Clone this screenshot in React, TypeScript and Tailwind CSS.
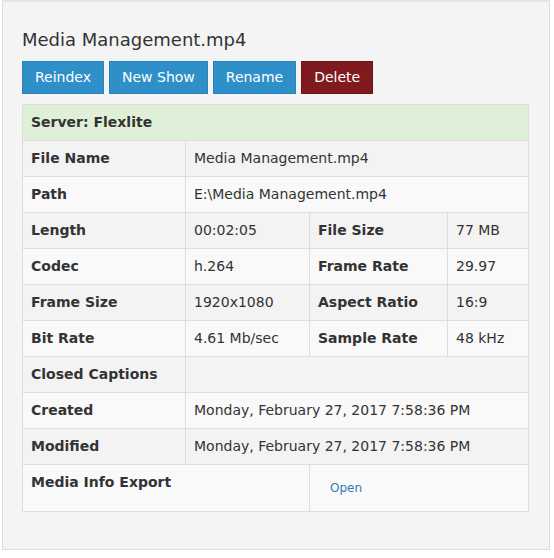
import React from "react";

const font = { fontFamily: '"DejaVu Sans", Verdana, sans-serif' };

const lbl = "border border-[#dddddd] px-2 py-2 font-bold text-[14px] leading-[19px] text-[#333333] text-left align-top";
const val = "border border-[#dddddd] px-2 py-2 text-[14px] leading-[19px] text-[#333333] text-left align-top";

export default function App() {
  return (
    <div className="w-[554px] h-[558px] bg-white" style={font}>
      <div className="ml-[2px] w-[548px] h-[550px] bg-[#f4f4f4] border border-[#dddddd] border-t-2 border-t-[#e4e4e4] pt-[27px] pl-[19px]">
        <h3 className="text-[18px] leading-[22px] font-normal text-[#333333] m-0">Media Management.mp4</h3>
        <div className="flex gap-[5px] mt-[10px]">
          <button className="h-[33px] px-3 bg-[#2f8fc8] border border-[#2a82b8] text-white text-[14px] leading-[19px]">Reindex</button>
          <button className="h-[33px] px-3 bg-[#2f8fc8] border border-[#2a82b8] text-white text-[14px] leading-[19px]">New Show</button>
          <button className="h-[33px] px-3 bg-[#2f8fc8] border border-[#2a82b8] text-white text-[14px] leading-[19px]">Rename</button>
          <button className="h-[33px] px-3 bg-[#801a1e] border border-[#6e1518] text-white text-[14px] leading-[19px]">Delete</button>
        </div>
        <table className="mt-[10px] w-[506px] border-collapse table-fixed">
          <colgroup>
            <col className="w-[163px]" />
            <col className="w-[124px]" />
            <col className="w-[138px]" />
            <col className="w-[81px]" />
          </colgroup>
          <tbody>
            <tr className="bg-[#dff0d8]">
              <td colSpan={4} className={lbl}>Server: Flexlite</td>
            </tr>
            <tr className="bg-[#f3f3f3]">
              <td className={lbl}>File Name</td>
              <td colSpan={3} className={val}>Media Management.mp4</td>
            </tr>
            <tr className="bg-[#f9f9f9]">
              <td className={lbl}>Path</td>
              <td colSpan={3} className={val}>E:\Media Management.mp4</td>
            </tr>
            <tr className="bg-[#f3f3f3]">
              <td className={lbl}>Length</td>
              <td className={val}>00:02:05</td>
              <td className={lbl}>File Size</td>
              <td className={val}>77 MB</td>
            </tr>
            <tr className="bg-[#f9f9f9]">
              <td className={lbl}>Codec</td>
              <td className={val}>h.264</td>
              <td className={lbl}>Frame Rate</td>
              <td className={val}>29.97</td>
            </tr>
            <tr className="bg-[#f3f3f3]">
              <td className={lbl}>Frame Size</td>
              <td className={val}>1920x1080</td>
              <td className={lbl}>Aspect Ratio</td>
              <td className={val}>16:9</td>
            </tr>
            <tr className="bg-[#f9f9f9]">
              <td className={lbl}>Bit Rate</td>
              <td className={val}>4.61 Mb/sec</td>
              <td className={lbl}>Sample Rate</td>
              <td className={val}>48 kHz</td>
            </tr>
            <tr className="bg-[#f3f3f3]">
              <td className={lbl}>Closed Captions</td>
              <td colSpan={3} className={val}>&nbsp;</td>
            </tr>
            <tr className="bg-[#f9f9f9]">
              <td className={lbl}>Created</td>
              <td colSpan={3} className={val}>Monday, February 27, 2017 7:58:36 PM</td>
            </tr>
            <tr className="bg-[#f3f3f3]">
              <td className={lbl}>Modified</td>
              <td colSpan={3} className={val}>Monday, February 27, 2017 7:58:36 PM</td>
            </tr>
            <tr className="bg-[#f9f9f9]">
              <td colSpan={2} className={lbl}>Media Info Export</td>
              <td colSpan={2} className={val}>
                <span className="inline-block px-3 py-[6px] text-[12px] leading-[18px] text-[#337ab7]">Open</span>
              </td>
            </tr>
          </tbody>
        </table>
      </div>
    </div>
  );
}
